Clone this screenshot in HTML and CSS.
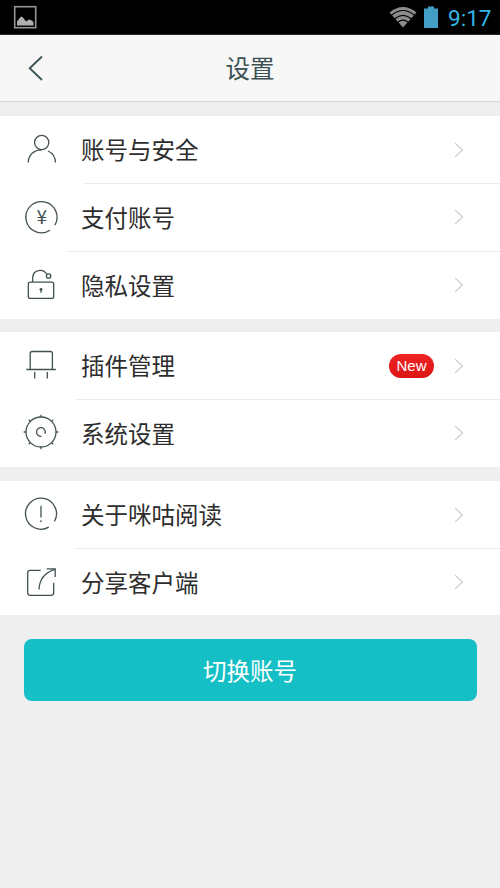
FILE: index.html
```html
<!DOCTYPE html>
<html lang="zh-CN">
<head>
<meta charset="utf-8">
<title>设置</title>
<link rel="stylesheet" href="styles.css">
</head>
<body>
<div class="status">
  <svg class="status-pic" width="24" height="24" viewBox="0 0 24 24"><rect x="1.700" y="1.700" width="21" height="21" fill="none" stroke="#959595" stroke-width="1.600"/><path d="M4 20.500v-4l4-5 2 1 3 4 3-2 3 1 1.500 2v3z" fill="#b0b0b0"/></svg>
  <div class="status-right">
    <svg width="28" height="22" viewBox="0 0 28 22"><path d="M.5 6.500Q14-4.500 27.500 6.500L14 21.500z" fill="#8c8c8c"/><path d="M2.500 9.200Q14-.2 25.500 9.200M5.800 12.800Q14 6 22.200 12.800M9 16.300Q14 12 19 16.300" fill="none" stroke="#000" stroke-width="1.200"/></svg>
    <svg class="battery" width="14" height="22" viewBox="0 0 14 22"><path d="M0 2.500h4V.5h6v2h4V22H0z" fill="#429ec5"/></svg>
    <span class="clock">9:17</span>
  </div>
</div>
<header class="header">
  <svg class="back" width="16" height="28" viewBox="0 0 16 28"><path d="M14 2.500L1.700 14.300 14 26" fill="none" stroke="#3f5557" stroke-width="1.900"/></svg>
  <h1>设置</h1>
</header>
<main>
  <section class="group">
    <div class="row">
      <svg class="icon" viewBox="0 0 44 44"><circle cx="21.700" cy="14.500" r="7.100"/><path d="M8.300 34.500C8.500 27 14 21.800 21.700 21.800M28 23C32.500 25 35.300 29 35.500 34.500"/></svg>
      <span class="label">账号与安全</span>
      <svg class="chev" viewBox="0 0 10 16"><path d="M1 1l7.500 7L1 15"/></svg>
    </div>
    <div class="row tall">
      <svg class="icon" viewBox="0 0 44 44"><path d="M34.800 30.200A15.600 15.600 0 1 0 30 35.200"/><text x="21.700" y="29">¥</text></svg>
      <span class="label">支付账号</span>
      <svg class="chev" viewBox="0 0 10 16"><path d="M1 1l7.500 7L1 15"/></svg>
    </div>
    <div class="row tall line-wide">
      <svg class="icon" viewBox="0 0 44 44"><rect x="8.300" y="19.200" width="25.400" height="16.200" rx="2"/><path d="M12.700 19v-4C12.700 6 23.500 5.300 26.700 11.300M21 26.500v3.200"/><circle cx="28.600" cy="13" r="2.200"/><circle class="dot" cx="21" cy="26.300" r="1.400"/></svg>
      <span class="label">隐私设置</span>
      <svg class="chev" viewBox="0 0 10 16"><path d="M1 1l7.500 7L1 15"/></svg>
    </div>
  </section>
  <section class="group plugins">
    <div class="row">
      <svg class="icon" viewBox="0 0 44 44"><path d="M10.200 25.500V9.500q0-2 2-2h18.200q2 0 2 2v16M6.300 25.500h29.500M14.700 28v6.500M27.300 28v6.500"/></svg>
      <span class="label">插件管理</span>
      <span class="badge">New</span>
      <svg class="chev" viewBox="0 0 10 16"><path d="M1 1l7.500 7L1 15"/></svg>
    </div>
    <div class="row tall line-mid">
      <svg class="icon" viewBox="0 0 44 44"><circle cx="21" cy="21" r="15"/><path d="M21 6V3.700M21 36v2.300M6 21H3.700M36 21h2.300M10.400 10.400L8.700 8.700M31.600 10.400l1.700-1.700M10.400 31.600l-1.700 1.700M31.600 31.600l1.700 1.700M25 22.700A4.400 4.400 0 1 0 21.500 25.400"/></svg>
      <span class="label">系统设置</span>
      <svg class="chev" viewBox="0 0 10 16"><path d="M1 1l7.500 7L1 15"/></svg>
    </div>
  </section>
  <section class="group">
    <div class="row">
      <svg class="icon" viewBox="0 0 44 44"><path d="M34.400 28.500A15.500 15.500 0 1 0 28.800 34.100M21 12.800v11.700M21 27.300v2"/></svg>
      <span class="label">关于咪咕阅读</span>
      <svg class="chev" viewBox="0 0 10 16"><path d="M1 1l7.500 7L1 15"/></svg>
    </div>
    <div class="row tall line-mid short">
      <svg class="icon" viewBox="0 0 44 44"><path d="M20.700 10.300H10.200q-2.500 0-2.500 2.500v20q0 2.500 2.500 2.500h21q2.500 0 2.500-2.500V22.700M19 29.500C19.300 19 25 12.500 35 9.300M26.700 8.900h8.500v8"/></svg>
      <span class="label">分享客户端</span>
      <svg class="chev" viewBox="0 0 10 16"><path d="M1 1l7.500 7L1 15"/></svg>
    </div>
  </section>
  <button class="switch">切换账号</button>
</main>
</body>
</html>
```
FILE: styles.css
```css
* { box-sizing: border-box; }
body {
  margin: 0;
  height: 888px;
  background: #efefef;
  color: #2d2d2d;
  font-family: "Noto Sans CJK SC", sans-serif;
}
svg { display: block; flex: none; }
.status {
  height: 35px;
  padding: 0 8.5px 0 13px;
  background: #000;
  border-bottom: 1px solid #292526;
  display: flex;
  align-items: center;
  justify-content: space-between;
}
.status-right { display: flex; align-items: center; }
.battery { margin-left: 7px; }
.clock {
  margin-left: 10px;
  padding-top: 1px;
  color: #35b5e5;
  font: 22.5px/34px Roboto, sans-serif;
}
.header {
  height: 67px;
  padding: 0 28px;
  background: #f7f7f7;
  border-bottom: 1px solid #d6d6d6;
  display: grid;
  grid-template-columns: 16px 1fr 16px;
  align-items: center;
}
.header h1 {
  margin: 0;
  color: #3b5052;
  font-size: 24.5px;
  line-height: 66px;
  font-weight: 400;
  text-align: center;
}
.group { background: #fff; margin-top: 14px; }
.plugins { margin-top: 13px; }
.row {
  position: relative;
  height: 67px;
  padding: 0 36px 0 20px;
  display: flex;
  align-items: center;
}
.tall { height: 68px; }
.short { height: 67px; }
.tall::before {
  content: "";
  position: absolute;
  top: 0;
  right: 0;
  left: 83px;
  height: 1px;
  background: #ebebeb;
}
.line-wide::before { left: 68px; }
.line-mid::before { left: 76px; }
.icon {
  width: 44px;
  height: 44px;
  fill: none;
  stroke: #435153;
  stroke-width: 1.3;
}
.icon text {
  fill: #435153;
  stroke: none;
  font: 19px "Noto Sans CJK SC", sans-serif;
  text-anchor: middle;
}
.icon .dot { fill: #435153; stroke: none; }
.label {
  flex: 1;
  margin-left: 17px;
  font-size: 23.5px;
  line-height: 34px;
}
.row:first-child .label { padding-bottom: 1px; }
.chev {
  width: 10px;
  height: 16px;
  fill: none;
  stroke: #cbcbcb;
  stroke-width: 1.1;
}
.badge {
  width: 45px;
  height: 24px;
  margin-right: 20px;
  border-radius: 12px;
  background: linear-gradient(#ef2424, #dc1414);
  color: #fff;
  font: 15px/24px "Liberation Sans", sans-serif;
  text-align: center;
}
.switch {
  display: block;
  width: 453px;
  height: 62px;
  margin: 24px 0 0 23.5px;
  padding: 0;
  border: 0;
  border-radius: 8px;
  background: #14c0c6;
  color: #fff;
  font: 23.5px/62px "Noto Sans CJK SC", sans-serif;
}
```
